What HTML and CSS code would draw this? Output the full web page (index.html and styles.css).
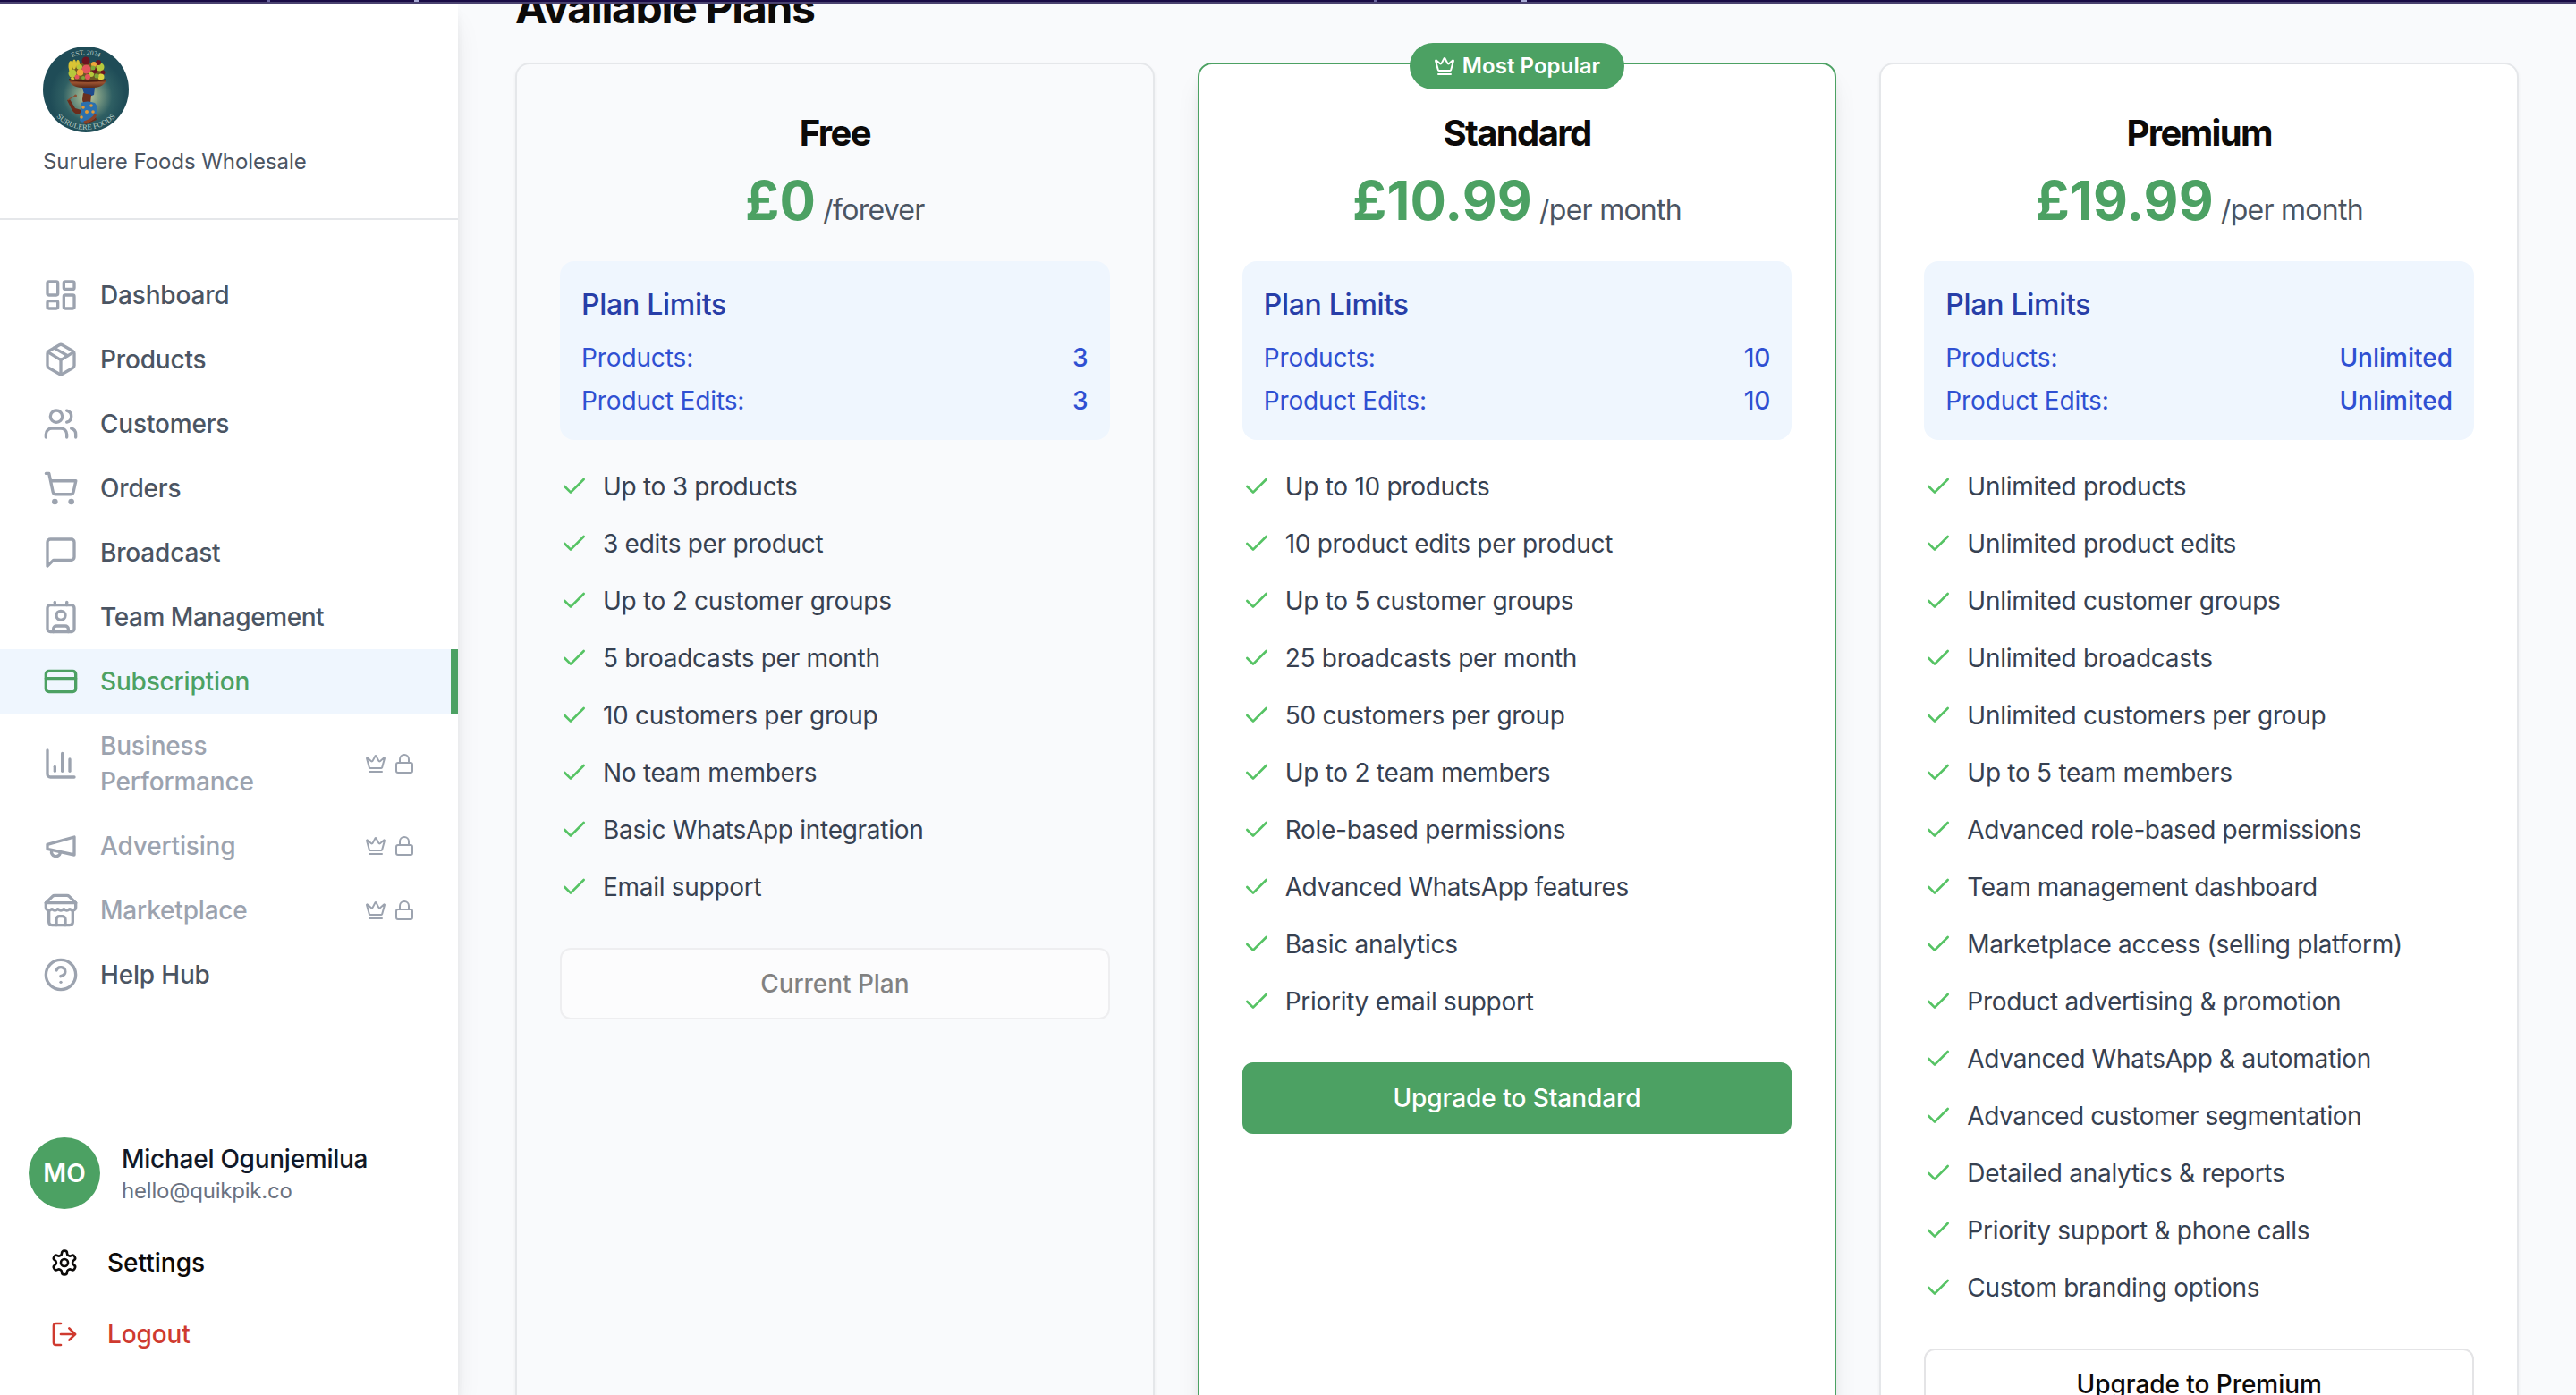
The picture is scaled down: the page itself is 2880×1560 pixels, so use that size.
FILE: index.html
```html
<!DOCTYPE html>
<html lang="en">
<head>
<meta charset="utf-8">
<title>Subscription</title>
<link rel="stylesheet" href="styles.css">
</head>
<body>
<svg class="sprite" aria-hidden="true">
  <symbol id="i-dashboard" viewBox="0 0 24 24"><rect width="7" height="9" x="3" y="3" rx="1"/><rect width="7" height="5" x="14" y="3" rx="1"/><rect width="7" height="9" x="14" y="12" rx="1"/><rect width="7" height="5" x="3" y="16" rx="1"/></symbol>
  <symbol id="i-package" viewBox="0 0 24 24"><path d="M11 21.73a2 2 0 0 0 2 0l7-4A2 2 0 0 0 21 16V8a2 2 0 0 0-1-1.73l-7-4a2 2 0 0 0-2 0l-7 4A2 2 0 0 0 3 8v8a2 2 0 0 0 1 1.73z"/><path d="M12 22V12"/><path d="m3.3 7 7.703 4.734a2 2 0 0 0 1.994 0L20.7 7"/><path d="m7.5 4.27 9 5.15"/></symbol>
  <symbol id="i-users" viewBox="0 0 24 24"><path d="M16 21v-2a4 4 0 0 0-4-4H6a4 4 0 0 0-4 4v2"/><circle cx="9" cy="7" r="4"/><path d="M22 21v-2a4 4 0 0 0-3-3.87"/><path d="M16 3.13a4 4 0 0 1 0 7.75"/></symbol>
  <symbol id="i-cart" viewBox="0 0 24 24"><circle cx="8" cy="21" r="1"/><circle cx="19" cy="21" r="1"/><path d="M2.05 2.05h2l2.66 12.42a2 2 0 0 0 2 1.58h9.78a2 2 0 0 0 1.95-1.57l1.65-7.43H5.12"/></symbol>
  <symbol id="i-message" viewBox="0 0 24 24"><path d="M21 15a2 2 0 0 1-2 2H7l-4 4V5a2 2 0 0 1 2-2h14a2 2 0 0 1 2 2z"/></symbol>
  <symbol id="i-contact" viewBox="0 0 24 24"><path d="M16 2v2"/><path d="M7 22v-2a2 2 0 0 1 2-2h6a2 2 0 0 1 2 2v2"/><path d="M8 2v2"/><circle cx="12" cy="11" r="3"/><rect x="3" y="4" width="18" height="18" rx="2"/></symbol>
  <symbol id="i-card" viewBox="0 0 24 24"><rect width="20" height="14" x="2" y="5" rx="2"/><path d="M2 10h20"/></symbol>
  <symbol id="i-chart" viewBox="0 0 24 24"><path d="M3 3v16a2 2 0 0 0 2 2h16"/><path d="M18 17V9"/><path d="M13 17V5"/><path d="M8 17v-3"/></symbol>
  <symbol id="i-megaphone" viewBox="0 0 24 24"><path d="m3 11 18-5v12L3 14v-3z"/><path d="M11.6 16.8a3 3 0 1 1-5.8-1.6"/></symbol>
  <symbol id="i-store" viewBox="0 0 24 24"><path d="m2 7 4.41-4.41A2 2 0 0 1 7.83 2h8.34a2 2 0 0 1 1.42.59L22 7"/><path d="M4 12v8a2 2 0 0 0 2 2h12a2 2 0 0 0 2-2v-8"/><path d="M15 22v-4a2 2 0 0 0-2-2h-2a2 2 0 0 0-2 2v4"/><path d="M2 7h20"/><path d="M22 7v3a2 2 0 0 1-2 2a2.7 2.7 0 0 1-1.59-.63.7.7 0 0 0-.82 0A2.7 2.7 0 0 1 16 12a2.7 2.7 0 0 1-1.59-.63.7.7 0 0 0-.82 0A2.7 2.7 0 0 1 12 12a2.7 2.7 0 0 1-1.59-.63.7.7 0 0 0-.82 0A2.7 2.7 0 0 1 8 12a2.7 2.7 0 0 1-1.59-.63.7.7 0 0 0-.82 0A2.7 2.7 0 0 1 4 12a2 2 0 0 1-2-2V7"/></symbol>
  <symbol id="i-help" viewBox="0 0 24 24"><circle cx="12" cy="12" r="10"/><path d="M9.09 9a3 3 0 0 1 5.83 1c0 2-3 3-3 3"/><path d="M12 17h.01"/></symbol>
  <symbol id="i-crown" viewBox="0 0 24 24"><path d="M11.562 3.266a.5.5 0 0 1 .876 0L15.39 8.87a1 1 0 0 0 1.516.294L21.183 5.5a.5.5 0 0 1 .798.519l-2.834 10.246a1 1 0 0 1-.956.734H5.81a1 1 0 0 1-.957-.734L2.02 6.02a.5.5 0 0 1 .798-.519l4.276 3.664a1 1 0 0 0 1.516-.294z"/><path d="M5 21h14"/></symbol>
  <symbol id="i-lock" viewBox="0 0 24 24"><rect width="18" height="11" x="3" y="11" rx="2"/><path d="M7 11V7a5 5 0 0 1 10 0v4"/></symbol>
  <symbol id="i-settings" viewBox="0 0 24 24"><path d="M12.22 2h-.44a2 2 0 0 0-2 2v.18a2 2 0 0 1-1 1.73l-.43.25a2 2 0 0 1-2 0l-.15-.08a2 2 0 0 0-2.73.73l-.22.38a2 2 0 0 0 .73 2.73l.15.1a2 2 0 0 1 1 1.72v.51a2 2 0 0 1-1 1.74l-.15.09a2 2 0 0 0-.73 2.73l.22.38a2 2 0 0 0 2.73.73l.15-.08a2 2 0 0 1 2 0l.43.25a2 2 0 0 1 1 1.73V20a2 2 0 0 0 2 2h.44a2 2 0 0 0 2-2v-.18a2 2 0 0 1 1-1.73l.43-.25a2 2 0 0 1 2 0l.15.08a2 2 0 0 0 2.73-.73l.22-.39a2 2 0 0 0-.73-2.73l-.15-.08a2 2 0 0 1-1-1.74v-.5a2 2 0 0 1 1-1.74l.15-.09a2 2 0 0 0 .73-2.73l-.22-.38a2 2 0 0 0-2.73-.73l-.15.08a2 2 0 0 1-2 0l-.43-.25a2 2 0 0 1-1-1.73V4a2 2 0 0 0-2-2z"/><circle cx="12" cy="12" r="3"/></symbol>
  <symbol id="i-logout" viewBox="0 0 24 24"><path d="M9 21H5a2 2 0 0 1-2-2V5a2 2 0 0 1 2-2h4"/><path d="m16 17 5-5-5-5"/><path d="M21 12H9"/></symbol>
  <symbol id="i-check" viewBox="0 0 24 24"><path d="M20 6 9 17l-5-5"/></symbol>
</svg>

<div class="topbar"></div>
<div class="app">
  <aside class="sidebar">
    <header class="brand">
      <svg class="logo" viewBox="0 0 96 96" role="img" aria-label="Surulere Foods">
        <defs>
          <radialGradient id="glow" cx="52%" cy="58%" r="44%"><stop offset="0" stop-color="#c3c99a"/><stop offset=".3" stop-color="#7b9a83"/><stop offset=".65" stop-color="#2f5f63"/><stop offset="1" stop-color="#1f4c57"/></radialGradient>
          <linearGradient id="bowl" x1="0" y1="0" x2="0" y2="1"><stop offset="0" stop-color="#5a2717"/><stop offset=".4" stop-color="#9a5230"/><stop offset="1" stop-color="#5b2a18"/></linearGradient>
          <path id="arc-top" d="M9 48A39 39 0 0 1 87 48"/>
          <path id="arc-bottom" d="M3 48A45 45 0 0 0 93 48"/>
        </defs>
        <circle cx="48" cy="48" r="48" fill="url(#glow)"/>
        <text class="logo-text" font-size="7.500"><textPath href="#arc-top" startOffset="50%" text-anchor="middle">EST. 2024</textPath></text>
        <text class="logo-text" font-size="8.500"><textPath href="#arc-bottom" startOffset="50%" text-anchor="middle">SURULERE FOODS</textPath></text>
        <rect x="29" y="19" width="39" height="18" rx="6" fill="#6d5a22"/>
        <g fill="#d9c435"><ellipse cx="31" cy="22" rx="2.500" ry="6"/><ellipse cx="35" cy="20" rx="2.200" ry="5.500"/><ellipse cx="39" cy="20" rx="2" ry="5"/></g>
        <g fill="#b6c93c"><circle cx="33" cy="30" r="4.500"/><circle cx="41" cy="23" r="3"/><circle cx="64" cy="23" r="4.500"/><circle cx="54" cy="31" r="3"/></g>
        <g fill="#6b1420"><circle cx="48" cy="16" r="4.500"/><circle cx="62" cy="18" r="3"/><circle cx="58" cy="27" r="3"/><circle cx="67" cy="29" r="2.500"/></g>
        <g fill="#e2555c"><circle cx="48.500" cy="25.500" r="5"/><circle cx="38" cy="34" r="2.500"/><circle cx="50" cy="34" r="3"/></g>
        <g fill="#f0a63a"><circle cx="41.500" cy="29" r="3.800"/><circle cx="57" cy="20" r="3"/></g>
        <g fill="#dbd33f"><circle cx="65" cy="34" r="3.500"/><circle cx="33" cy="36" r="2"/></g>
        <g fill="#7fa839"><circle cx="56" cy="24" r="2.500"/><circle cx="60" cy="33" r="2.500"/><circle cx="45" cy="35" r="2"/></g>
        <path d="M29 37h42c-1 5-7 9-14 9H43c-7 0-13-4-14-9z" fill="url(#bowl)"/>
        <path d="M29 37q21 4 42 0" fill="none" stroke="#47190f" stroke-width="1.500"/>
        <path d="M44 46h14l-1 8q-6 3-11-1z" fill="#1e4a8c"/>
        <path d="M45 52l9 2-1 10-5 1q-4-2-4-6z" fill="#6a2f1e"/>
        <path d="M27 60l3-1 6 10 7 2-2 5q-6 0-9-6zM58 75l2 7-12 5-4-2 9-10z" fill="#6b2c1b"/>
        <path d="M42 63q8-3 16 0 4 4 2 9l-1 7q-5 6-11 5-6 2-7-2l2-10z" fill="#2b70ad"/>
        <path d="M28 60q4-3 8-5" fill="none" stroke="#8a5034" stroke-width="1.300"/><circle cx="36.500" cy="55" r="1.500" fill="#8a5034"/>
        <path d="M59 76q-3 6-13 9" fill="none" stroke="#8a4226" stroke-width="3"/>
        <g fill="#e39a35"><circle cx="45" cy="68" r="1.800"/><circle cx="54" cy="66" r="1.800"/><circle cx="49" cy="73" r="2"/><circle cx="56" cy="73" r="1.800"/><circle cx="43" cy="79" r="1.800"/></g>
      </svg>
      <p class="brand-name">Surulere Foods Wholesale</p>
    </header>
    <nav class="nav">
      <a class="nav-item"><svg class="icon"><use href="#i-dashboard"/></svg><span>Dashboard</span></a>
      <a class="nav-item"><svg class="icon"><use href="#i-package"/></svg><span>Products</span></a>
      <a class="nav-item"><svg class="icon"><use href="#i-users"/></svg><span>Customers</span></a>
      <a class="nav-item"><svg class="icon"><use href="#i-cart"/></svg><span>Orders</span></a>
      <a class="nav-item"><svg class="icon"><use href="#i-message"/></svg><span>Broadcast</span></a>
      <a class="nav-item"><svg class="icon"><use href="#i-contact"/></svg><span class="snug">Team Management</span></a>
      <a class="nav-item active"><svg class="icon"><use href="#i-card"/></svg><span>Subscription</span></a>
      <a class="nav-item locked"><svg class="icon"><use href="#i-chart"/></svg><span>Business<br>Performance</span><span class="locks"><svg class="icon small"><use href="#i-crown"/></svg><svg class="icon small"><use href="#i-lock"/></svg></span></a>
      <a class="nav-item locked"><svg class="icon"><use href="#i-megaphone"/></svg><span>Advertising</span><span class="locks"><svg class="icon small"><use href="#i-crown"/></svg><svg class="icon small"><use href="#i-lock"/></svg></span></a>
      <a class="nav-item locked"><svg class="icon"><use href="#i-store"/></svg><span>Marketplace</span><span class="locks"><svg class="icon small"><use href="#i-crown"/></svg><svg class="icon small"><use href="#i-lock"/></svg></span></a>
      <a class="nav-item"><svg class="icon"><use href="#i-help"/></svg><span>Help Hub</span></a>
    </nav>
    <footer class="account">
      <div class="user">
        <span class="avatar">MO</span>
        <div><p class="user-name">Michael Ogunjemilua</p><p class="user-email">hello@quikpik.co</p></div>
      </div>
      <a class="action"><svg class="icon medium"><use href="#i-settings"/></svg>Settings</a>
      <a class="action logout"><svg class="icon medium"><use href="#i-logout"/></svg>Logout</a>
    </footer>
  </aside>

  <main class="content">
    <h2 class="heading">Available Plans</h2>
    <div class="plans">
      <section class="plan current">
        <h3 class="plan-name">Free</h3>
        <p class="price"><strong>£0</strong><span> /forever</span></p>
        <div class="limits">
          <h4>Plan Limits</h4>
          <dl><dt>Products:</dt><dd>3</dd></dl>
          <dl><dt>Product Edits:</dt><dd>3</dd></dl>
        </div>
        <ul class="features">
          <li><svg class="check"><use href="#i-check"/></svg>Up to 3 products</li>
          <li><svg class="check"><use href="#i-check"/></svg>3 edits per product</li>
          <li><svg class="check"><use href="#i-check"/></svg>Up to 2 customer groups</li>
          <li><svg class="check"><use href="#i-check"/></svg>5 broadcasts per month</li>
          <li><svg class="check"><use href="#i-check"/></svg>10 customers per group</li>
          <li><svg class="check"><use href="#i-check"/></svg>No team members</li>
          <li><svg class="check"><use href="#i-check"/></svg>Basic WhatsApp integration</li>
          <li><svg class="check"><use href="#i-check"/></svg>Email support</li>
        </ul>
        <button class="button" disabled>Current Plan</button>
      </section>

      <section class="plan popular">
        <span class="badge"><svg class="icon small"><use href="#i-crown"/></svg>Most Popular</span>
        <h3 class="plan-name">Standard</h3>
        <p class="price"><strong>£10.99</strong><span> /per month</span></p>
        <div class="limits">
          <h4>Plan Limits</h4>
          <dl><dt>Products:</dt><dd>10</dd></dl>
          <dl><dt>Product Edits:</dt><dd>10</dd></dl>
        </div>
        <ul class="features">
          <li><svg class="check"><use href="#i-check"/></svg>Up to 10 products</li>
          <li><svg class="check"><use href="#i-check"/></svg>10 product edits per product</li>
          <li><svg class="check"><use href="#i-check"/></svg>Up to 5 customer groups</li>
          <li><svg class="check"><use href="#i-check"/></svg>25 broadcasts per month</li>
          <li><svg class="check"><use href="#i-check"/></svg>50 customers per group</li>
          <li><svg class="check"><use href="#i-check"/></svg>Up to 2 team members</li>
          <li><svg class="check"><use href="#i-check"/></svg>Role-based permissions</li>
          <li class="snug"><svg class="check"><use href="#i-check"/></svg>Advanced WhatsApp features</li>
          <li><svg class="check"><use href="#i-check"/></svg>Basic analytics</li>
          <li><svg class="check"><use href="#i-check"/></svg>Priority email support</li>
        </ul>
        <button class="button primary">Upgrade to Standard</button>
      </section>

      <section class="plan">
        <h3 class="plan-name">Premium</h3>
        <p class="price"><strong>£19.99</strong><span> /per month</span></p>
        <div class="limits">
          <h4>Plan Limits</h4>
          <dl><dt>Products:</dt><dd>Unlimited</dd></dl>
          <dl><dt>Product Edits:</dt><dd>Unlimited</dd></dl>
        </div>
        <ul class="features">
          <li><svg class="check"><use href="#i-check"/></svg>Unlimited products</li>
          <li><svg class="check"><use href="#i-check"/></svg>Unlimited product edits</li>
          <li><svg class="check"><use href="#i-check"/></svg>Unlimited customer groups</li>
          <li><svg class="check"><use href="#i-check"/></svg>Unlimited broadcasts</li>
          <li><svg class="check"><use href="#i-check"/></svg>Unlimited customers per group</li>
          <li><svg class="check"><use href="#i-check"/></svg>Up to 5 team members</li>
          <li class="snug"><svg class="check"><use href="#i-check"/></svg>Advanced role-based permissions</li>
          <li class="snug"><svg class="check"><use href="#i-check"/></svg>Team management dashboard</li>
          <li><svg class="check"><use href="#i-check"/></svg>Marketplace access (selling platform)</li>
          <li><svg class="check"><use href="#i-check"/></svg>Product advertising &amp; promotion</li>
          <li><svg class="check"><use href="#i-check"/></svg>Advanced WhatsApp &amp; automation</li>
          <li class="snug"><svg class="check"><use href="#i-check"/></svg>Advanced customer segmentation</li>
          <li><svg class="check"><use href="#i-check"/></svg>Detailed analytics &amp; reports</li>
          <li><svg class="check"><use href="#i-check"/></svg>Priority support &amp; phone calls</li>
          <li><svg class="check"><use href="#i-check"/></svg>Custom branding options</li>
        </ul>
        <button class="button">Upgrade to Premium</button>
      </section>
    </div>
  </main>
</div>
</body>
</html>
```
FILE: styles.css
```css
* { box-sizing: border-box; margin: 0; padding: 0; }

:root {
  --green: #4ca163;
  --page: #f9fafc;
  --ink: #0c0a09;
  --pale-blue: #eff6fe;
  --line: #e5e7ea;
}

body {
  display: flex;
  flex-direction: column;
  height: 1560px;
  overflow: hidden;
  background: var(--page);
  color: var(--ink);
  font: 400 28px/40px Inter, "Liberation Sans", sans-serif;
  -webkit-font-smoothing: antialiased;
}

.sprite { display: none; }

.topbar {
  position: relative;
  z-index: 2;
  flex: none;
  height: 4px;
  border-bottom: 2px solid #4a4270;
  background:
    linear-gradient(90deg, transparent 298px, #6b66a0 298px 302px, transparent 302px 463px, #a9abd6 463px 468px, transparent 468px 1536px, #6b66a0 1536px 1540px, transparent 1540px 1701px, #a9abd6 1701px 1707px, transparent 1707px),
    #190b45;
}

.app { display: flex; flex: 1; min-height: 0; }

.icon, .check {
  flex: none;
  fill: none;
  stroke: currentColor;
  stroke-width: 2;
  stroke-linecap: round;
  stroke-linejoin: round;
}
.icon { width: 40px; height: 40px; color: #9ca3af; }
.icon.medium { width: 32px; height: 32px; color: inherit; }
.icon.small { width: 24px; height: 24px; }

/* Sidebar */
.sidebar {
  display: flex;
  flex-direction: column;
  flex: none;
  width: 512px;
  background: #fff;
  box-shadow: 0 20px 30px -6px rgba(0, 0, 0, .1), 0 8px 12px -4px rgba(0, 0, 0, .1);
}
.brand {
  display: flex;
  flex-direction: column;
  gap: 17px;
  padding: 48px 48px 47px;
  border-bottom: 2px solid var(--line);
}
.logo { display: block; width: 96px; height: 96px; }
.logo-text { fill: #b9cdc6; font-family: "Liberation Serif", serif; }
.brand-name { color: #4b5563; font-size: 24px; line-height: 32px; letter-spacing: -.06px; }

.nav { display: flex; flex-direction: column; padding-top: 48px; }
.nav-item {
  display: flex;
  align-items: center;
  gap: 24px;
  padding: 16px 48px;
  color: #4b5563;
  font-weight: 500;
  letter-spacing: -.18px;
}
.nav-item.active {
  border-right: 8px solid var(--green);
  background: var(--pale-blue);
  color: var(--green);
}
.active .icon { color: inherit; }
.nav-item.locked { color: #9ca3af; }
.locks { display: flex; gap: 8px; margin-left: auto; }

.account { display: flex; flex-direction: column; gap: 8px; margin-top: auto; padding: 32px; }
.user { display: flex; align-items: center; gap: 24px; margin-bottom: 16px; }
.avatar {
  display: grid;
  place-items: center;
  width: 80px;
  height: 80px;
  border-radius: 50%;
  background: var(--green);
  color: #fff;
  font-weight: 600;
}
.user-name { color: #111827; font-weight: 500; letter-spacing: -.26px; }
.user-email { color: #6b7280; font-size: 24px; line-height: 32px; letter-spacing: -.2px; }
.action { display: flex; align-items: center; gap: 32px; height: 72px; padding: 0 24px; font-weight: 500; }
.action.logout { color: #cf3a2f; letter-spacing: -.1px; }

/* Plans */
.content { flex: 1; padding: 0 64px; overflow: hidden; }
.heading {
  height: 66px;
  margin-top: -32px;
  margin-bottom: 32px;
  font-size: 48px;
  font-weight: 700;
  line-height: 73px;
  letter-spacing: -1.34px;
}
.plans { display: grid; grid-template-columns: repeat(3, 1fr); gap: 48px; height: 1640px; }
.plan {
  position: relative;
  display: flex;
  flex-direction: column;
  padding: 48px;
  border: 2px solid var(--line);
  border-radius: 16px;
  background: #fff;
  box-shadow: 0 2px 4px rgba(0, 0, 0, .05);
}
.plan.current { background: var(--page); }
.plan.popular {
  border-color: var(--green);
  box-shadow: 0 20px 30px -6px rgba(0, 0, 0, .1), 0 8px 12px -4px rgba(0, 0, 0, .1);
}
.badge {
  position: absolute;
  top: -24px;
  left: 50%;
  display: flex;
  align-items: center;
  justify-content: center;
  gap: 8px;
  width: 240px;
  height: 52px;
  border-radius: 26px;
  background: var(--green);
  color: #fff;
  font-size: 24px;
  font-weight: 600;
  letter-spacing: .06px;
  transform: translateX(-50%);
}
.badge .icon { color: inherit; }
.plan-name { font-size: 40px; font-weight: 700; line-height: 58px; letter-spacing: -1.65px; text-align: center; }
.price { margin: 10px 0 32px; height: 72px; line-height: 72px; text-align: center; }
.price strong { color: var(--green); font-size: 60px; font-weight: 700; letter-spacing: .1px; }
.price span { color: #4b5563; font-size: 32px; letter-spacing: -.75px; }

.limits {
  display: flex;
  flex-direction: column;
  gap: 8px;
  padding: 24px;
  border-radius: 16px;
  background: var(--pale-blue);
}
.limits h4 { margin-bottom: 6px; color: #273ea8; font-size: 32px; font-weight: 500; line-height: 50px; letter-spacing: -.28px; }
.limits dl { display: flex; justify-content: space-between; color: #2f50d2; }
.limits dt { letter-spacing: -.12px; }
.limits dd { font-weight: 500; }

.features { display: flex; flex-direction: column; gap: 24px; margin: 32px 0 48px; list-style: none; }
.features li { display: flex; align-items: center; gap: 16px; color: #374151; letter-spacing: -.28px; }
.check { width: 32px; height: 32px; color: #56c364; }

.button {
  height: 80px;
  border: 2px solid #e4e4e6;
  border-radius: 12px;
  background: #fff;
  color: var(--ink);
  font: 500 28px/40px Inter, "Liberation Sans", sans-serif;
  letter-spacing: -.05px;
}
.button.primary { border-color: var(--green); background: var(--green); color: #fff; }
.button:disabled { opacity: .5; }

/* Wide labels set slightly tighter */
.nav-item .snug, .features .snug { letter-spacing: -.44px; }
```
